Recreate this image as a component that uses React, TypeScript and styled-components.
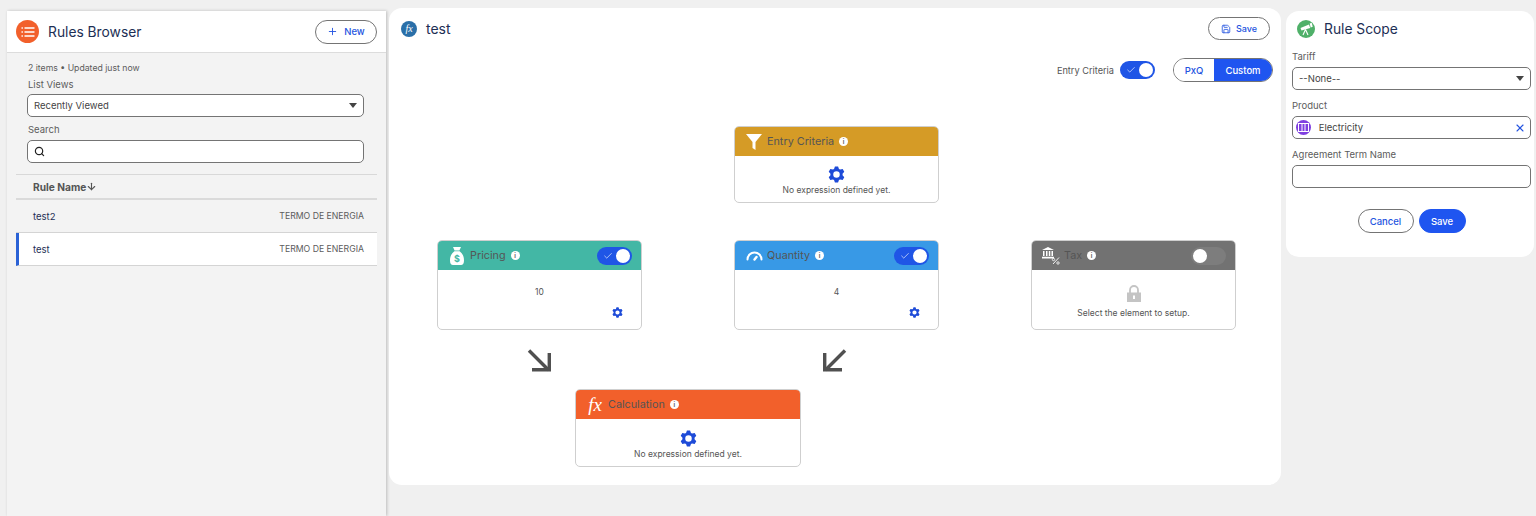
import React from "react";
import styled, { createGlobalStyle } from "styled-components";
import { Plus, Search, ArrowDown, Check, X, Save } from "lucide-react";

const GlobalStyle = createGlobalStyle`
  html, body {
    margin: 0;
    padding: 0;
    background: #f0f0f0;
    font-family: "Inter", "Liberation Sans", sans-serif;
    overflow: hidden;
  }
  * { box-sizing: border-box; }
`;

const Page = styled.div`
  display: flex;
  align-items: flex-start;
  height: 516px;
  padding-left: 7px;
`;

/* left list panel */
const Browser = styled.aside`
  width: 379px;
  height: 505px;
  margin-top: 11px;
  background: #f3f3f3;
  box-shadow: 1px 0 3px rgba(0, 0, 0, 0.22);
`;

const BrowserHeader = styled.div`
  display: flex;
  align-items: center;
  justify-content: space-between;
  height: 42px;
  padding: 0 9px;
  background: #fff;
  border-bottom: 1px solid #dcdcdc;
`;

const HeaderLeft = styled.div`
  display: flex;
  align-items: center;
  gap: 9px;
`;

const RoundIcon = styled.span<{ $bg: string; $size: number }>`
  display: flex;
  align-items: center;
  justify-content: center;
  flex: none;
  width: ${(p) => p.$size}px;
  height: ${(p) => p.$size}px;
  border-radius: 50%;
  background: ${(p) => p.$bg};
  color: #fff;
`;

const Title = styled.h1`
  margin: 0;
  font-size: 13.8px;
  font-weight: 400;
  color: #1d2f55;
`;

const OutlineButton = styled.button`
  display: flex;
  align-items: center;
  justify-content: center;
  gap: 6px;
  height: 24px;
  padding: 0 12px;
  background: #fff;
  border: 1px solid #747474;
  border-radius: 12px;
  color: #2454e0;
  font: 500 9.5px "Inter", sans-serif;
`;

const NewButton = styled(OutlineButton)`
  width: 62px;
  padding: 0;
`;

const BrowserForm = styled.div`
  padding: 9px 22px 0 20px;
`;

const Meta = styled.div`
  padding-left: 1px;
  font-size: 8.7px;
  line-height: 12px;
  color: #5c5c5c;
`;

const FieldLabel = styled.label`
  display: block;
  font-size: 9.5px;
  line-height: 12px;
  color: #5c5c5c;
`;

const ListLabel = styled(FieldLabel)`
  margin: 5px 0 3px 1px;
`;

const SearchLabel = styled(FieldLabel)`
  margin: 7px 0 4px 1px;
`;

const Field = styled.div`
  position: relative;
  display: flex;
  align-items: center;
  height: 23px;
  padding: 0 6px;
  background: #fff;
  border: 1px solid #747474;
  border-radius: 5px;
  font-size: 9.5px;
  color: #444;
`;

const Caret = styled.span`
  position: absolute;
  right: 6px;
  top: 8px;
  width: 0;
  height: 0;
  border-left: 4px solid transparent;
  border-right: 4px solid transparent;
  border-top: 5px solid #444;
`;

const ListTable = styled.div`
  margin: 11px 9px 0;
`;

const HeadRow = styled.div`
  display: flex;
  align-items: center;
  height: 26px;
  padding-left: 17px;
  border-top: 1px solid #d8d8d8;
  border-bottom: 2px solid #dadada;
  font-size: 10.2px;
  font-weight: 700;
  color: #555;
`;

const ListRow = styled.div<{ $active?: boolean }>`
  display: flex;
  align-items: center;
  justify-content: space-between;
  height: 33px;
  padding: 0 13px 0 ${(p) => (p.$active ? 14 : 17)}px;
  background: ${(p) => (p.$active ? "#fff" : "transparent")};
  border-left: ${(p) => (p.$active ? "3px solid #2a62d6" : "none")};
  border-bottom: 1px solid #d4d4d4;
  font-size: 9.5px;
  color: #1d2f55;
`;

const RowKind = styled.span`
  font-size: 8.7px;
  color: #5c5c5c;
`;

/* center canvas */
const Main = styled.main`
  width: 892px;
  height: 477px;
  margin: 8px 0 0 3px;
  background: #fff;
  border-radius: 13px;
`;

const MainHeader = styled.div`
  display: flex;
  align-items: center;
  justify-content: space-between;
  padding: 9px 11px 0 12px;
`;

const MainTitle = styled.h2`
  margin: 0;
  font-size: 14px;
  font-weight: 400;
  color: #1d2f55;
`;

const SaveOutline = styled(OutlineButton)`
  gap: 5px;
  width: 62px;
  height: 23px;
  padding: 0;
  font-size: 9px;
`;

const Controls = styled.div`
  display: flex;
  justify-content: flex-end;
  align-items: center;
  margin-top: 18px;
  padding-right: 8px;
`;

const ControlLabel = styled.span`
  margin-right: 6px;
  font-size: 9.2px;
  color: #555;
`;

const Toggle = styled.span<{ $on: boolean }>`
  position: relative;
  display: flex;
  align-items: center;
  flex: none;
  width: 35px;
  height: 18px;
  padding-left: 6px;
  border-radius: 9px;
  background: ${(p) => (p.$on ? "#1f55e6" : "rgba(255,255,255,0.08)")};
  color: #fff;
  &::after {
    content: "";
    position: absolute;
    top: 2px;
    ${(p) => (p.$on ? "right: 2px;" : "left: 2px;")}
    width: 14px;
    height: 14px;
    border-radius: 50%;
    background: #fff;
  }
`;

const Segmented = styled.div`
  display: flex;
  height: 24px;
  margin-left: 18px;
  border: 1px solid #747474;
  border-radius: 12px;
  overflow: hidden;
  font-size: 9.5px;
  font-weight: 500;
`;

const Segment = styled.span<{ $active?: boolean }>`
  display: flex;
  align-items: center;
  justify-content: center;
  width: ${(p) => (p.$active ? 58 : 40)}px;
  background: ${(p) => (p.$active ? "#1f55f0" : "#fff")};
  color: ${(p) => (p.$active ? "#fff" : "#2454e0")};
`;

const Diagram = styled.div`
  display: grid;
  grid-template-columns: repeat(3, 205px);
  column-gap: 92px;
  padding: 44px 0 0 48px;
`;

const Card = styled.div<{ $height: number }>`
  display: flex;
  flex-direction: column;
  height: ${(p) => p.$height}px;
  background: #fff;
  border: 1px solid #cfcfcf;
  border-radius: 5px;
  overflow: hidden;
`;

const EntrySlot = styled.div`
  grid-column: 1 / span 3;
  width: 205px;
  margin: 0 0 37px 297px;
`;

const CardHeader = styled.div<{ $bg: string }>`
  display: flex;
  align-items: center;
  flex: none;
  height: 29px;
  padding: 0 9px 0 10px;
  background: ${(p) => p.$bg};
  color: #fff;
`;

const HeaderIcon = styled.span`
  display: flex;
  justify-content: center;
  width: 18px;
  margin-right: 4px;
`;

const CardTitle = styled.span`
  font-size: 10.8px;
  color: #555;
`;

const InfoDot = styled.span`
  display: flex;
  align-items: center;
  justify-content: center;
  width: 9px;
  height: 9px;
  margin-left: 5px;
  border-radius: 50%;
  background: #fff;
  font-size: 6px;
  font-weight: 700;
  color: #666;
`;

const Spacer = styled.span`
  flex: 1;
`;

const EmptyBody = styled.div`
  display: flex;
  flex: 1;
  flex-direction: column;
  align-items: center;
  justify-content: center;
  gap: 2px;
  padding-top: 3px;
  font-size: 8.5px;
  color: #555;
`;

const ValueBody = styled.div`
  display: flex;
  flex: 1;
  flex-direction: column;
  padding: 17px 18px 0;
  font-size: 8.5px;
  color: #555;
`;

const Value = styled.div`
  text-align: center;
  margin-bottom: 10px;
`;

const GearEnd = styled.div`
  display: flex;
  justify-content: flex-end;
`;

const LockBody = styled(EmptyBody)`
  gap: 6px;
  padding-top: 4px;
`;

const ArrowRow = styled.div`
  grid-column: 1 / span 3;
  display: flex;
  height: 59px;
  padding: 19px 0 0 90px;
  gap: 272px;
  color: #505050;
`;

const CalcSlot = styled.div`
  grid-column: 1 / span 3;
  width: 226px;
  margin-left: 138px;
`;

const FxMark = styled.span<{ $size: number }>`
  font: italic 400 ${(p) => p.$size}px "Liberation Serif", serif;
  color: #fff;
`;

/* right panel */
const Scope = styled.aside`
  width: 248px;
  height: 246px;
  margin: 11px 0 0 5px;
  padding: 7px 3px 0 6px;
  background: #fff;
  border-radius: 13px;
`;

const ScopeHead = styled.div`
  display: flex;
  align-items: center;
  gap: 9px;
  height: 22px;
  margin-bottom: 11px;
  padding-left: 5px;
`;

const ScopeLabel = styled(FieldLabel)`
  margin: 10px 0 4px;
`;

const ClearIcon = styled.span`
  position: absolute;
  right: 4px;
  top: 5px;
  color: #2454e0;
  display: flex;
`;

const PillIcon = styled(RoundIcon)`
  margin-right: 5px;
  margin-left: -3px;
`;

const Actions = styled.div`
  display: flex;
  justify-content: center;
  gap: 5px;
  margin-top: 21px;
`;

const BrandButton = styled(OutlineButton)`
  background: #1f55f0;
  border-color: #1f55f0;
  color: #fff;
  width: 47px;
  padding: 0;
`;

const CancelButton = styled(OutlineButton)`
  width: 56px;
  padding: 0;
`;

// six-tooth gear outline with a round hole
const gearPath = (() => {
  const pt = (r: number, deg: number) => {
    const a = (deg * Math.PI) / 180;
    return `${(12 + r * Math.cos(a)).toFixed(2)} ${(12 + r * Math.sin(a)).toFixed(2)}`;
  };
  let d = "";
  for (let k = 0; k < 6; k++) {
    const a = -90 + k * 60;
    d += `${k === 0 ? "M" : "L"}${pt(8.6, a - 24)}L${pt(11.6, a - 11)}L${pt(11.6, a + 11)}L${pt(8.6, a + 24)}`;
  }
  return `${d}ZM12 7.400a4.600 4.600 0 100 9.200 4.600 4.600 0 000-9.200z`;
})();

const Gear = ({ size }: { size: number }) => (
  <svg width={size} height={size} viewBox="0 0 24 24" fill="#1e4bd8">
    <path fillRule="evenodd" d={gearPath} />
  </svg>
);

const ListIcon = () => (
  <svg width="14" height="12" viewBox="0 0 14 12" stroke="#fff" strokeWidth="1.4" strokeLinecap="round">
    <path d="M1 2h.4M4 2h9M1 6h.4M4 6h9M1 10h.4M4 10h9" />
  </svg>
);

const Funnel = () => (
  <svg width="18" height="18" viewBox="0 0 18 18" fill="#fff">
    <path d="M1 1h16l-6.500 8v8L7.500 15V9z" />
  </svg>
);

const MoneyBag = () => (
  <svg width="14" height="18" viewBox="0 0 14 18">
    <path fill="#fff" d="M3 0h8l-1.600 3.400H4.600zM4.400 4.200h5.200C12 6 14 9 14 13.500c0 3-1.200 4.500-3 4.500H3c-1.800 0-3-1.500-3-4.500C0 9 2 6 4.400 4.200z" />
    <text x="7" y="15" fontSize="9" fontWeight="700" textAnchor="middle" fill="#43b7a5" fontFamily="Inter, sans-serif">$</text>
  </svg>
);

const Gauge = () => (
  <svg width="17" height="11" viewBox="0 0 17 11" fill="none" stroke="#fff" strokeWidth="2" strokeLinecap="round">
    <path d="M1.500 9.500a7 7 0 0114 0" />
    <path d="M8.500 9.500l2-2.500" strokeWidth="2.400" />
  </svg>
);

const Bank = () => (
  <svg width="18" height="18" viewBox="0 0 18 18" fill="#fff">
    <path d="M6 0l6 3H0zM1 4h1.500v5H1zM4 4h1.500v5H4zM6.800 4h1.500v5H6.800zM9.500 4H11v5H9.500zM0 9.800h12V11.500H0z" />
    <path d="M11 17l6-6.500" stroke="#fff" strokeWidth="0.900" />
    <circle cx="11.500" cy="12.500" r="1.200" fill="none" stroke="#fff" strokeWidth="0.800" />
    <circle cx="16" cy="16" r="1.200" fill="none" stroke="#fff" strokeWidth="0.800" />
  </svg>
);

const Lock = () => (
  <svg width="14" height="17" viewBox="0 0 14 17">
    <path d="M3 8V5a4 4 0 018 0v3" fill="none" stroke="#c4c4c4" strokeWidth="1.800" />
    <path fill="#c4c4c4" d="M0 7.500h14V17H0z" />
    <rect x="6" y="10.500" width="2" height="3.500" fill="#fff" />
  </svg>
);

const Telescope = () => (
  <svg width="14" height="14" viewBox="0 0 14 14" fill="#fff">
    <path d="M1.500 6l8.500-3.500 1.200 3.400-8.700 2.600zM10.700 1.500l2-.7 1 4-2 .7z" />
    <path d="M6.500 7.500L4 13M6.500 7.500L9 13" stroke="#fff" strokeWidth="1.100" fill="none" />
  </svg>
);

const ProductIcon = () => (
  <svg width="11" height="9" viewBox="0 0 11 9" fill="none" stroke="#fff" strokeWidth="1">
    <rect x="0.500" y="0.500" width="10" height="8" />
    <path d="M4 .5v8M7 .5v8" />
  </svg>
);

const FlowArrow = ({ flip }: { flip?: boolean }) => (
  <svg width="24" height="23" viewBox="0 0 24 23" fill="none" stroke="currentColor" strokeWidth="3.400">
    <g transform={flip ? "matrix(-1 0 0 1 24 0)" : undefined}>
      <path d="M2 1.500l19.500 19.500" />
      <path d="M5 20.800h17.300V4" />
    </g>
  </svg>
);

const App = () => {
  return (
    <>
      <GlobalStyle />
      <Page>
        <Browser>
          <BrowserHeader>
            <HeaderLeft>
              <RoundIcon $bg="#f2602b" $size={23}>
                <ListIcon />
              </RoundIcon>
              <Title>Rules Browser</Title>
            </HeaderLeft>
            <NewButton>
              <Plus size={11} />
              New
            </NewButton>
          </BrowserHeader>
          <BrowserForm>
            <Meta>2 items • Updated just now</Meta>
            <ListLabel>List Views</ListLabel>
            <Field>
              Recently Viewed
              <Caret />
            </Field>
            <SearchLabel>Search</SearchLabel>
            <Field>
              <Search size={11} color="#222" strokeWidth={2.6} />
            </Field>
          </BrowserForm>
          <ListTable>
            <HeadRow>
              Rule Name
              <ArrowDown size={11} strokeWidth={2.4} />
            </HeadRow>
            <ListRow>
              test2
              <RowKind>TERMO DE ENERGIA</RowKind>
            </ListRow>
            <ListRow $active>
              test
              <RowKind>TERMO DE ENERGIA</RowKind>
            </ListRow>
          </ListTable>
        </Browser>

        <Main>
          <MainHeader>
            <HeaderLeft>
              <RoundIcon $bg="#2a6fa8" $size={16}>
                <FxMark $size={10}>fx</FxMark>
              </RoundIcon>
              <MainTitle>test</MainTitle>
            </HeaderLeft>
            <SaveOutline>
              <Save size={10} />
              Save
            </SaveOutline>
          </MainHeader>
          <Controls>
            <ControlLabel>Entry Criteria</ControlLabel>
            <Toggle $on>
              <Check size={10} strokeWidth={1.5} />
            </Toggle>
            <Segmented>
              <Segment>PxQ</Segment>
              <Segment $active>Custom</Segment>
            </Segmented>
          </Controls>
          <Diagram>
            <EntrySlot>
              <Card $height={77}>
                <CardHeader $bg="#d59b26">
                  <HeaderIcon>
                    <Funnel />
                  </HeaderIcon>
                  <CardTitle>Entry Criteria</CardTitle>
                  <InfoDot>i</InfoDot>
                </CardHeader>
                <EmptyBody>
                  <Gear size={17} />
                  No expression defined yet.
                </EmptyBody>
              </Card>
            </EntrySlot>
            <Card $height={90}>
              <CardHeader $bg="#43b7a5">
                <HeaderIcon>
                  <MoneyBag />
                </HeaderIcon>
                <CardTitle>Pricing</CardTitle>
                <InfoDot>i</InfoDot>
                <Spacer />
                <Toggle $on>
                  <Check size={10} strokeWidth={1.5} />
                </Toggle>
              </CardHeader>
              <ValueBody>
                <Value>10</Value>
                <GearEnd>
                  <Gear size={11} />
                </GearEnd>
              </ValueBody>
            </Card>
            <Card $height={90}>
              <CardHeader $bg="#3899e6">
                <HeaderIcon>
                  <Gauge />
                </HeaderIcon>
                <CardTitle>Quantity</CardTitle>
                <InfoDot>i</InfoDot>
                <Spacer />
                <Toggle $on>
                  <Check size={10} strokeWidth={1.5} />
                </Toggle>
              </CardHeader>
              <ValueBody>
                <Value>4</Value>
                <GearEnd>
                  <Gear size={11} />
                </GearEnd>
              </ValueBody>
            </Card>
            <Card $height={90}>
              <CardHeader $bg="#727272">
                <HeaderIcon>
                  <Bank />
                </HeaderIcon>
                <CardTitle>Tax</CardTitle>
                <InfoDot>i</InfoDot>
                <Spacer />
                <Toggle $on={false} />
              </CardHeader>
              <LockBody>
                <Lock />
                Select the element to setup.
              </LockBody>
            </Card>
            <ArrowRow>
              <FlowArrow />
              <FlowArrow flip />
            </ArrowRow>
            <CalcSlot>
              <Card $height={78}>
                <CardHeader $bg="#f2602b">
                  <HeaderIcon>
                    <FxMark $size={19}>fx</FxMark>
                  </HeaderIcon>
                  <CardTitle>Calculation</CardTitle>
                  <InfoDot>i</InfoDot>
                </CardHeader>
                <EmptyBody>
                  <Gear size={17} />
                  No expression defined yet.
                </EmptyBody>
              </Card>
            </CalcSlot>
          </Diagram>
        </Main>

        <Scope>
          <ScopeHead>
            <RoundIcon $bg="#4fb069" $size={18}>
              <Telescope />
            </RoundIcon>
            <Title>Rule Scope</Title>
          </ScopeHead>
          <ScopeLabel>Tariff</ScopeLabel>
          <Field>
            --None--
            <Caret />
          </Field>
          <ScopeLabel>Product</ScopeLabel>
          <Field>
            <PillIcon $bg="#7f3fe0" $size={15}>
              <ProductIcon />
            </PillIcon>
            &nbsp;Electricity
            <ClearIcon>
              <X size={12} strokeWidth={2.2} />
            </ClearIcon>
          </Field>
          <ScopeLabel>Agreement Term Name</ScopeLabel>
          <Field />
          <Actions>
            <CancelButton>Cancel</CancelButton>
            <BrandButton>Save</BrandButton>
          </Actions>
        </Scope>
      </Page>
    </>
  );
};

export default App;
